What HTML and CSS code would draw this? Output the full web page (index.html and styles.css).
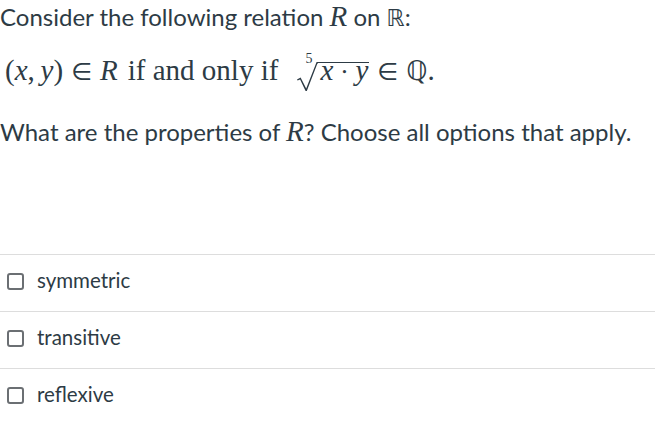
FILE: index.html
```html
<!DOCTYPE html>
<html>
<head>
<meta charset="utf-8">
<link rel="stylesheet" href="styles.css">
</head>
<body>
<div class="question">
  <p class="line first">Consider the following relation <span class="mi">R</span> on <span class="bb">ℝ</span>:</p>
  <p class="line math">(<span class="mi">x</span>,&thinsp;<span class="mi">y</span>)<span class="rel">∈</span><span class="mi">R</span><span class="txt">if and only if</span><span class="root"><svg class="rad" viewBox="0 0 22 27" preserveAspectRatio="none" aria-hidden="true"><path d="M1 16.2 L4.6 14.4 L10.2 24.6 L20.6 0 L22 0 L22 1.5 L21.4 1.5 L10.8 27 L9.6 27 L4.1 16.4 L1.6 17.2 Z"/></svg><span class="idx">5</span><span class="radicand"><span class="mi">x</span><span class="dot">⋅</span><span class="mi">y</span></span></span><span class="rel">∈</span><span class="bb">ℚ</span>.</p>
  <p class="line">What are the properties of <span class="mi">R</span>? Choose all options that apply.</p>
</div>
<div class="answers">
  <label class="option"><span class="box"></span><span class="label">symmetric</span></label>
  <label class="option"><span class="box"></span><span class="label">transitive</span></label>
  <label class="option"><span class="box"></span><span class="label">reflexive</span></label>
</div>
</body>
</html>
```
FILE: styles.css
```css
html, body {
  margin: 0;
  padding: 0;
  background: #fff;
}
body {
  font-family: Lato, "Liberation Sans", sans-serif;
  color: #2d3b45;
  font-size: 24px;
}
.question {
  height: 254px;
  padding-top: 2px;
  box-sizing: border-box;
}
.line {
  margin: 0 0 25px 0;
  line-height: 30px;
  white-space: nowrap;
}
.first {
  margin-bottom: 23px;
}
.mi {
  font-family: "Liberation Serif", "DejaVu Serif", serif;
  font-style: italic;
  font-size: 29px;
  line-height: 1;
}
.bb {
  font-family: "DejaVu Sans", sans-serif;
  font-size: 23px;
  line-height: 1;
}
.math {
  font-family: "Liberation Serif", "DejaVu Serif", serif;
  font-size: 29px;
  padding-left: 5px;
  margin-bottom: 26px;
}
.math .mi {
  font-size: inherit;
  line-height: inherit;
}
.math .bb {
  font-size: 27px;
  line-height: inherit;
}
.math .rel {
  font-family: "DejaVu Sans", sans-serif;
  font-size: 24px;
  line-height: inherit;
  margin: 0 8px;
}
.txt {
  margin: 0 17px 0 10px;
}
.root {
  position: relative;
  display: inline-block;
  padding-left: 21px;
  margin-left: 1px;
  line-height: 7px;
}
.rad {
  position: absolute;
  left: 0;
  top: 0;
  width: 22px;
  height: 100%;
  fill: #2d3b45;
}
.idx {
  position: absolute;
  left: 9px;
  top: -8px;
  font-size: 14px;
  line-height: 10px;
}
.radicand {
  display: inline-block;
  border-top: 1.5px solid #2d3b45;
  line-height: 7px;
  padding: 4px 1px 15px 3px;
}
.dot {
  margin: 0 7px;
  font-size: 24px;
}
.option {
  display: flex;
  align-items: flex-start;
  height: 57px;
  box-sizing: border-box;
  border-top: 1px solid #ddd;
  padding: 18px 0 0 7px;
  font-size: 20.5px;
  line-height: 15px;
}
.box {
  width: 13px;
  height: 13px;
  border: 2px solid #6b6f73;
  border-radius: 3px;
  margin-right: 13px;
  flex: none;
}
.label {
  line-height: 15px;
}
```
